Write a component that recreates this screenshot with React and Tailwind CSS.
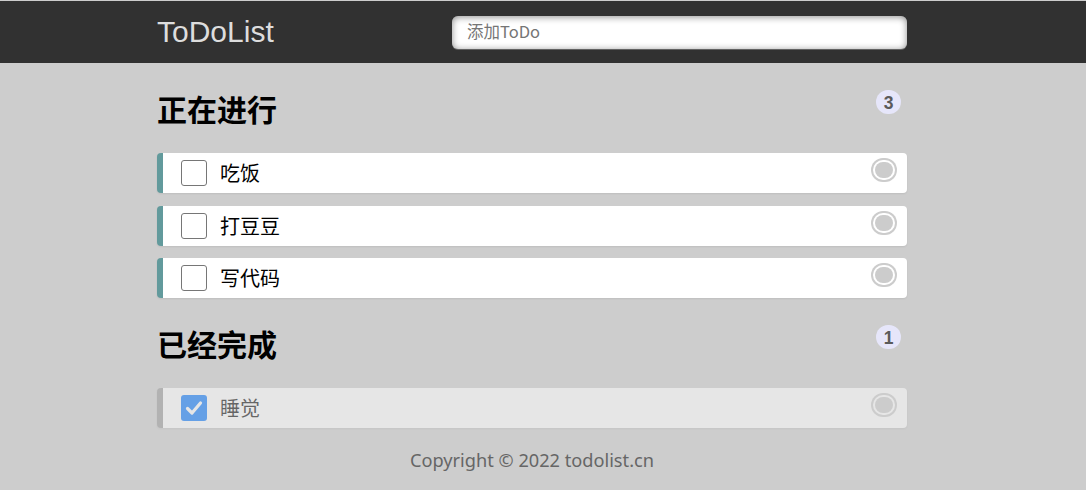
const doing = ["吃饭", "打豆豆", "写代码"];
const done = ["睡觉"];

const cjk = { fontFamily: '"Noto Sans CJK SC", "Liberation Sans", sans-serif' };

function DeleteDot() {
  return (
    <div className="ml-auto mr-[10px] self-start mt-[5px] w-[26px] h-[24px] rounded-full bg-[#cccccc] p-[2px]">
      <div className="w-full h-full rounded-full bg-white p-[2px]">
        <div className="w-full h-full rounded-full bg-[#cccccc]" />
      </div>
    </div>
  );
}

function Item({ text, checked }) {
  return (
    <li
      className={
        "h-[40px] flex items-center bg-white rounded-[4px] border-l-[6px] shadow-[0_1px_2px_rgba(0,0,0,0.07)] " +
        (checked ? "border-[#999999] opacity-50" : "border-[#629a9c]")
      }
    >
      {checked ? (
        <div className="ml-[18px] w-[26px] h-[26px] rounded-[3px] bg-[#0075ff] flex items-center justify-center">
          <svg width="20" height="20" viewBox="0 0 20 20">
            <path d="M3.5 10.5 L8 15 L16.5 5" fill="none" stroke="white" strokeWidth="3.2" strokeLinecap="round" strokeLinejoin="round" />
          </svg>
        </div>
      ) : (
        <div className="ml-[18px] w-[26px] h-[26px] rounded-[3px] border border-[#767676] bg-white" />
      )}
      <p className="ml-[13px] text-[20px] leading-[40px] text-black" style={cjk}>
        {text}
      </p>
      <DeleteDot />
    </li>
  );
}

function Heading({ title, count }) {
  return (
    <h2 className="mt-[25px] mb-[25px] h-[40px] flex justify-between items-start">
      <span className="text-[30px] leading-[40px] font-bold text-black" style={cjk}>
        {title}
      </span>
      <span
        className="mt-[2px] mr-[6px] w-[25px] h-[24px] rounded-full bg-[#e6e6fa] text-[17.5px] leading-[26px] text-center font-bold text-[#5a5a5a]"
        style={{ fontFamily: '"Liberation Sans", sans-serif' }}
      >
        {count}
      </span>
    </h2>
  );
}

export default function App() {
  return (
    <div className="min-h-[490px] bg-[#cdcdcd] pt-[1px]">
      {/* HEADER */}
      <header className="h-[62px] bg-[#313131]">
        <div className="ml-[157px] w-[750px] flex justify-between">
          <label
            className="text-[30px] leading-[62px] text-[#dddddd]"
            style={{ fontFamily: '"Liberation Sans", Arial, sans-serif' }}
          >
            ToDoList
          </label>
          <input
            placeholder="添加ToDo"
            className="mt-[15px] w-[455px] h-[33px] rounded-[6px] bg-white pl-[15px] pb-[3px] text-[16.5px] text-black placeholder:text-[#757575] outline-none shadow-[0_1px_0_rgba(255,255,255,0.24),inset_0_1px_7px_rgba(0,0,0,0.45)]"
            style={cjk}
          />
        </div>
      </header>

      {/* LISTS */}
      <section className="ml-[157px] w-[750px] flow-root">
        <Heading title="正在进行" count={3} />
        <ol className="flex flex-col gap-[12.5px]">
          {doing.map((t) => (
            <Item key={t} text={t} />
          ))}
        </ol>
        <Heading title="已经完成" count={1} />
        <ul className="flex flex-col gap-[12.5px]">
          {done.map((t) => (
            <Item key={t} text={t} checked />
          ))}
        </ul>
        <footer
          className="mt-[21px] text-center text-[18.2px] leading-[23px] text-[#666666]"
          style={{ fontFamily: '"Noto Sans", sans-serif' }}
        >
          Copyright © 2022 todolist.cn
        </footer>
      </section>
    </div>
  );
}
